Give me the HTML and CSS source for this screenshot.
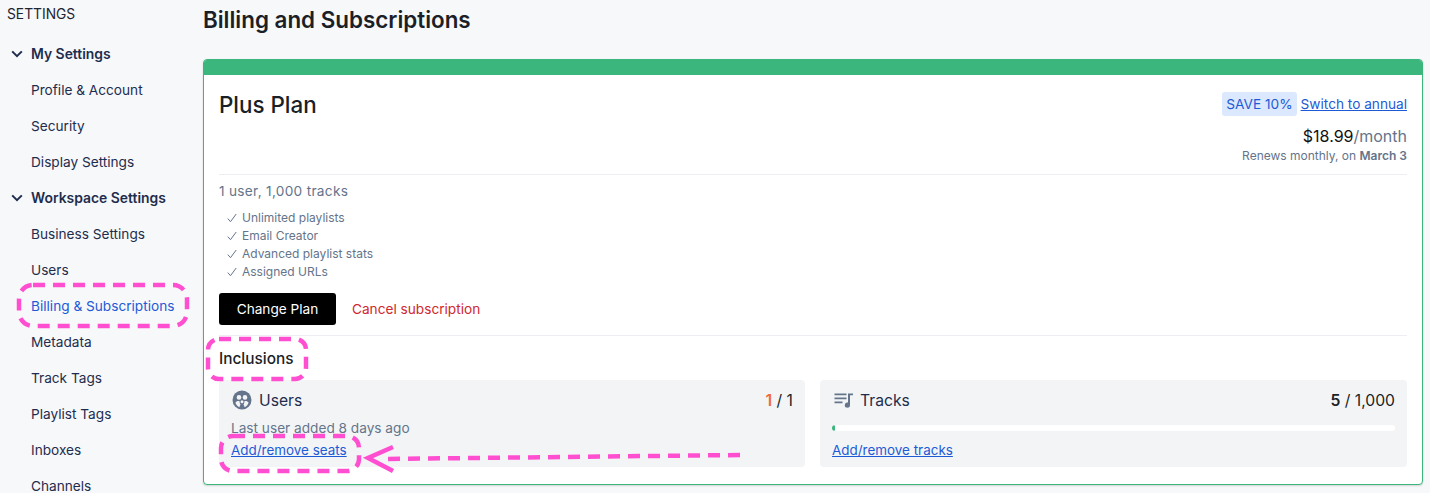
FILE: index.html
```html
<!DOCTYPE html>
<html lang="en">
  <head>
    <meta charset="UTF-8" />
    <title>Billing and Subscriptions</title>
    <link rel="stylesheet" href="styles.css">
  </head>
  <body>
    <div class="page">
      <aside class="sidebar">
        <div class="sidebar-title">SETTINGS</div>
        <div class="nav-group">
          <svg class="chevron" viewBox="0 0 12 8"><path d="M1.2 1.4 6 6.2l4.8-4.8" /></svg>
          My Settings
        </div>
        <a class="nav-item">Profile &amp; Account</a>
        <a class="nav-item">Security</a>
        <a class="nav-item">Display Settings</a>
        <div class="nav-group">
          <svg class="chevron" viewBox="0 0 12 8"><path d="M1.2 1.4 6 6.2l4.8-4.8" /></svg>
          Workspace Settings
        </div>
        <a class="nav-item">Business Settings</a>
        <a class="nav-item">Users</a>
        <a class="nav-item active">Billing &amp; Subscriptions</a>
        <a class="nav-item">Metadata</a>
        <a class="nav-item">Track Tags</a>
        <a class="nav-item">Playlist Tags</a>
        <a class="nav-item">Inboxes</a>
        <a class="nav-item">Channels</a>
      </aside>

      <main class="content">
        <h1>Billing and Subscriptions</h1>
        <section class="plan-card">
          <div class="plan-bar"></div>
          <div class="plan-body">
            <div class="plan-head">
              <h2>Plus Plan</h2>
              <div class="plan-price">
                <div class="switch-row">
                  <span class="save-badge">SAVE 10%</span>
                  <a class="link">Switch to annual</a>
                </div>
                <div class="price"><span class="amount">$18.99</span>/month</div>
                <div class="renews">Renews monthly, on <b>March 3</b></div>
              </div>
            </div>

            <div class="plan-info">
              <div class="plan-summary">1 user, 1,000 tracks</div>
              <ul class="features">
                <li><svg class="tick" viewBox="0 0 10 10"><path d="M.8 5.600 3.500 8.700 9.200 1" /></svg>Unlimited playlists</li>
                <li><svg class="tick" viewBox="0 0 10 10"><path d="M.8 5.600 3.500 8.700 9.200 1" /></svg>Email Creator</li>
                <li><svg class="tick" viewBox="0 0 10 10"><path d="M.8 5.600 3.500 8.700 9.200 1" /></svg>Advanced playlist stats</li>
                <li><svg class="tick" viewBox="0 0 10 10"><path d="M.8 5.600 3.500 8.700 9.200 1" /></svg>Assigned URLs</li>
              </ul>
              <div class="plan-actions">
                <button class="btn-black">Change Plan</button>
                <a class="cancel">Cancel subscription</a>
              </div>
            </div>

            <div class="inclusions">
              <h3>Inclusions</h3>
              <div class="inclusion-grid">
                <div class="inclusion">
                  <div class="inclusion-head">
                    <svg class="inc-icon" viewBox="0 0 20 20">
                      <circle cx="10" cy="10" r="9.500" fill="#64748b" />
                      <circle cx="7" cy="7.400" r="2.300" fill="#f3f4f6" />
                      <circle cx="13" cy="7.400" r="2.300" fill="#f3f4f6" />
                      <path d="M3.400 12.800c1-1.700 2.800-2.200 4.200-1.500 0 1.500.3 2.600 1 3.300-.6.600-1 1.500-1.200 2.700-1.800-.8-3.200-2.500-4-4.500z" fill="#f3f4f6" />
                      <path d="M16.600 12.800c-1-1.700-2.800-2.200-4.200-1.500 0 1.500-.3 2.600-1 3.300.6.600 1 1.500 1.200 2.700 1.800-.8 3.200-2.500 4-4.500z" fill="#f3f4f6" />
                      <circle cx="10" cy="11.800" r="1.500" fill="#f3f4f6" />
                    </svg>
                    <span class="inc-name">Users</span>
                    <span class="inc-count"><b class="over">1</b> / 1</span>
                  </div>
                  <div class="inc-note">Last user added 8 days ago</div>
                  <a class="link">Add/remove seats</a>
                </div>
                <div class="inclusion">
                  <div class="inclusion-head">
                    <svg class="inc-icon" viewBox="0 0 20 20">
                      <path d="M1.500 3.500h12v1.800h-12zM1.500 7.500h12v1.800h-12zM1.500 11.500h8v1.800h-8z" fill="#64748b" />
                      <path d="M15 3.500h5v1.800h-3v9.700a2.600 2.600 0 1 1-2-2.500z" fill="#64748b" />
                    </svg>
                    <span class="inc-name">Tracks</span>
                    <span class="inc-count"><b>5</b> / 1,000</span>
                  </div>
                  <div class="progress"><div class="progress-fill" style="width: 0.5%"></div></div>
                  <a class="link">Add/remove tracks</a>
                </div>
              </div>
            </div>
          </div>
        </section>
      </main>
    </div>

    <!-- hand drawn annotations on top of the screenshot -->
    <svg class="annotations" viewBox="0 0 1430 493">
      <rect x="19" y="285" width="168" height="41" rx="14" />
      <rect x="208" y="339" width="98" height="40" rx="11" />
      <rect x="221" y="436" width="138" height="35" rx="12" />
      <path d="M740 455 384 459" />
      <path class="solid" d="M393 447 368 458 393 471" />
    </svg>
  </body>
</html>
```

FILE: styles.css
```css
:root {
  --navy: #1e2d4d;
  --grey: #64748b;
  --blue: #1d5bd6;
  --green: #3bb67c;
  --panel: #f3f4f6;
  --line: #eceef1;
}

* {
  margin: 0;
  padding: 0;
  box-sizing: border-box;
}

html,
body {
  height: 100%;
  overflow: hidden;
}

body {
  font-family: Inter, "Liberation Sans", sans-serif;
  font-size: 13.65px;
  color: #1b1f27;
  background: #f7f8fa;
}

.page {
  display: flex;
  align-items: flex-start;
}

.sidebar {
  width: 203px;
  flex-shrink: 0;
  padding-top: 6px;
  color: var(--navy);
}

.sidebar-title {
  padding-left: 7px;
  font-size: 13.8px;
  line-height: 16px;
  color: #1f2430;
  margin-bottom: 14px;
}

.nav-group {
  display: flex;
  align-items: center;
  height: 36px;
  padding-left: 11px;
  font-size: 13.9px;
  font-weight: 600;
}

.chevron {
  width: 12px;
  height: 8px;
  margin-right: 8px;
  fill: none;
  stroke: var(--navy);
  stroke-width: 2;
}

.nav-item {
  display: flex;
  align-items: center;
  height: 36px;
  padding-left: 31px;
}

.nav-item.active {
  color: var(--blue);
}

.content {
  flex: 1;
  padding-right: 7px;
  min-width: 0;
}

h1 {
  font-size: 22.4px;
  font-weight: 600;
  line-height: 28px;
  padding-top: 6px;
  margin-bottom: 25px;
}

.plan-card {
  height: 426px;
  background: white;
  border: 1px solid var(--green);
  border-radius: 4px;
  box-shadow: 0 1px 2px rgba(0, 0, 0, 0.15);
  overflow: hidden;
}

.plan-bar {
  height: 15px;
  background: var(--green);
}

.plan-body {
  padding: 0 15px;
}

.plan-head {
  display: flex;
  justify-content: space-between;
  padding-top: 16px;
  height: 100px;
  border-bottom: 1px solid var(--line);
}

.plan-head h2 {
  font-size: 22.4px;
  font-weight: 500;
  line-height: 28px;
}

.plan-price {
  display: flex;
  flex-direction: column;
  align-items: flex-end;
}

.switch-row {
  display: flex;
  align-items: center;
  gap: 4px;
  height: 24px;
  margin-top: 1px;
}

.save-badge {
  background: #dbe8fe;
  color: var(--blue);
  border-radius: 3px;
  padding: 0 4px;
  line-height: 24px;
}

.link {
  color: var(--blue);
  text-decoration: underline;
}

.price {
  font-size: 16px;
  line-height: 20px;
  color: var(--grey);
  margin-top: 10px;
}

.amount {
  color: #111;
}

.renews {
  font-size: 12px;
  line-height: 18px;
  color: var(--grey);
  margin-top: 1px;
}

.renews b {
  font-weight: 600;
}

.plan-info {
  height: 161px;
  padding-top: 6px;
  border-bottom: 1px solid var(--line);
}

.plan-summary {
  line-height: 20px;
  letter-spacing: 0.3px;
  color: var(--grey);
  margin-bottom: 8px;
}

.features {
  list-style: none;
  font-size: 12px;
  line-height: 18px;
  color: var(--grey);
  padding-left: 8px;
}

.features li {
  display: flex;
  align-items: center;
}

.tick {
  width: 10px;
  height: 10px;
  margin-right: 5px;
  fill: none;
  stroke: var(--grey);
  stroke-width: 1;
}

.plan-actions {
  display: flex;
  align-items: center;
  gap: 16px;
  margin-top: 12px;
}

.btn-black {
  width: 117px;
  height: 32px;
  background: black;
  color: white;
  border: none;
  border-radius: 3px;
  font: inherit;
}

.cancel {
  color: #d0282e;
}

.inclusions h3 {
  font-size: 15.4px;
  font-weight: 500;
  line-height: 22px;
  padding: 12px 0 10px;
}

.inclusion-grid {
  display: grid;
  grid-template-columns: 586px 1fr;
  gap: 15px;
}

.inclusion {
  height: 87px;
  background: var(--panel);
  border-radius: 4px;
  padding: 10px 12px;
  font-size: 13.45px;
}

.inclusion-head {
  display: flex;
  align-items: center;
  height: 20px;
  font-size: 15.7px;
}

.inc-icon {
  width: 20px;
  height: 20px;
  margin: 0 7px 0 1px;
}

.inc-name {
  flex: 1;
  color: var(--navy);
}

.inc-count b {
  font-weight: 600;
}

.inc-count .over {
  color: #f0683a;
}

.inc-note {
  font-size: 13.65px;
  color: var(--grey);
  line-height: 20px;
  margin-top: 8px;
  margin-bottom: 4px;
}

.progress {
  height: 6px;
  background: white;
  border-radius: 3px;
  margin: 15px 0 11px;
  overflow: hidden;
}

.progress-fill {
  height: 100%;
  background: var(--green);
  border-radius: 3px;
}

.annotations {
  position: absolute;
  top: 0;
  left: 0;
  width: 1430px;
  height: 493px;
  fill: none;
  stroke: #ff4fd0;
  stroke-width: 4.5;
  stroke-dasharray: 12 8;
  pointer-events: none;
}

.annotations .solid {
  stroke-dasharray: none;
}
```
